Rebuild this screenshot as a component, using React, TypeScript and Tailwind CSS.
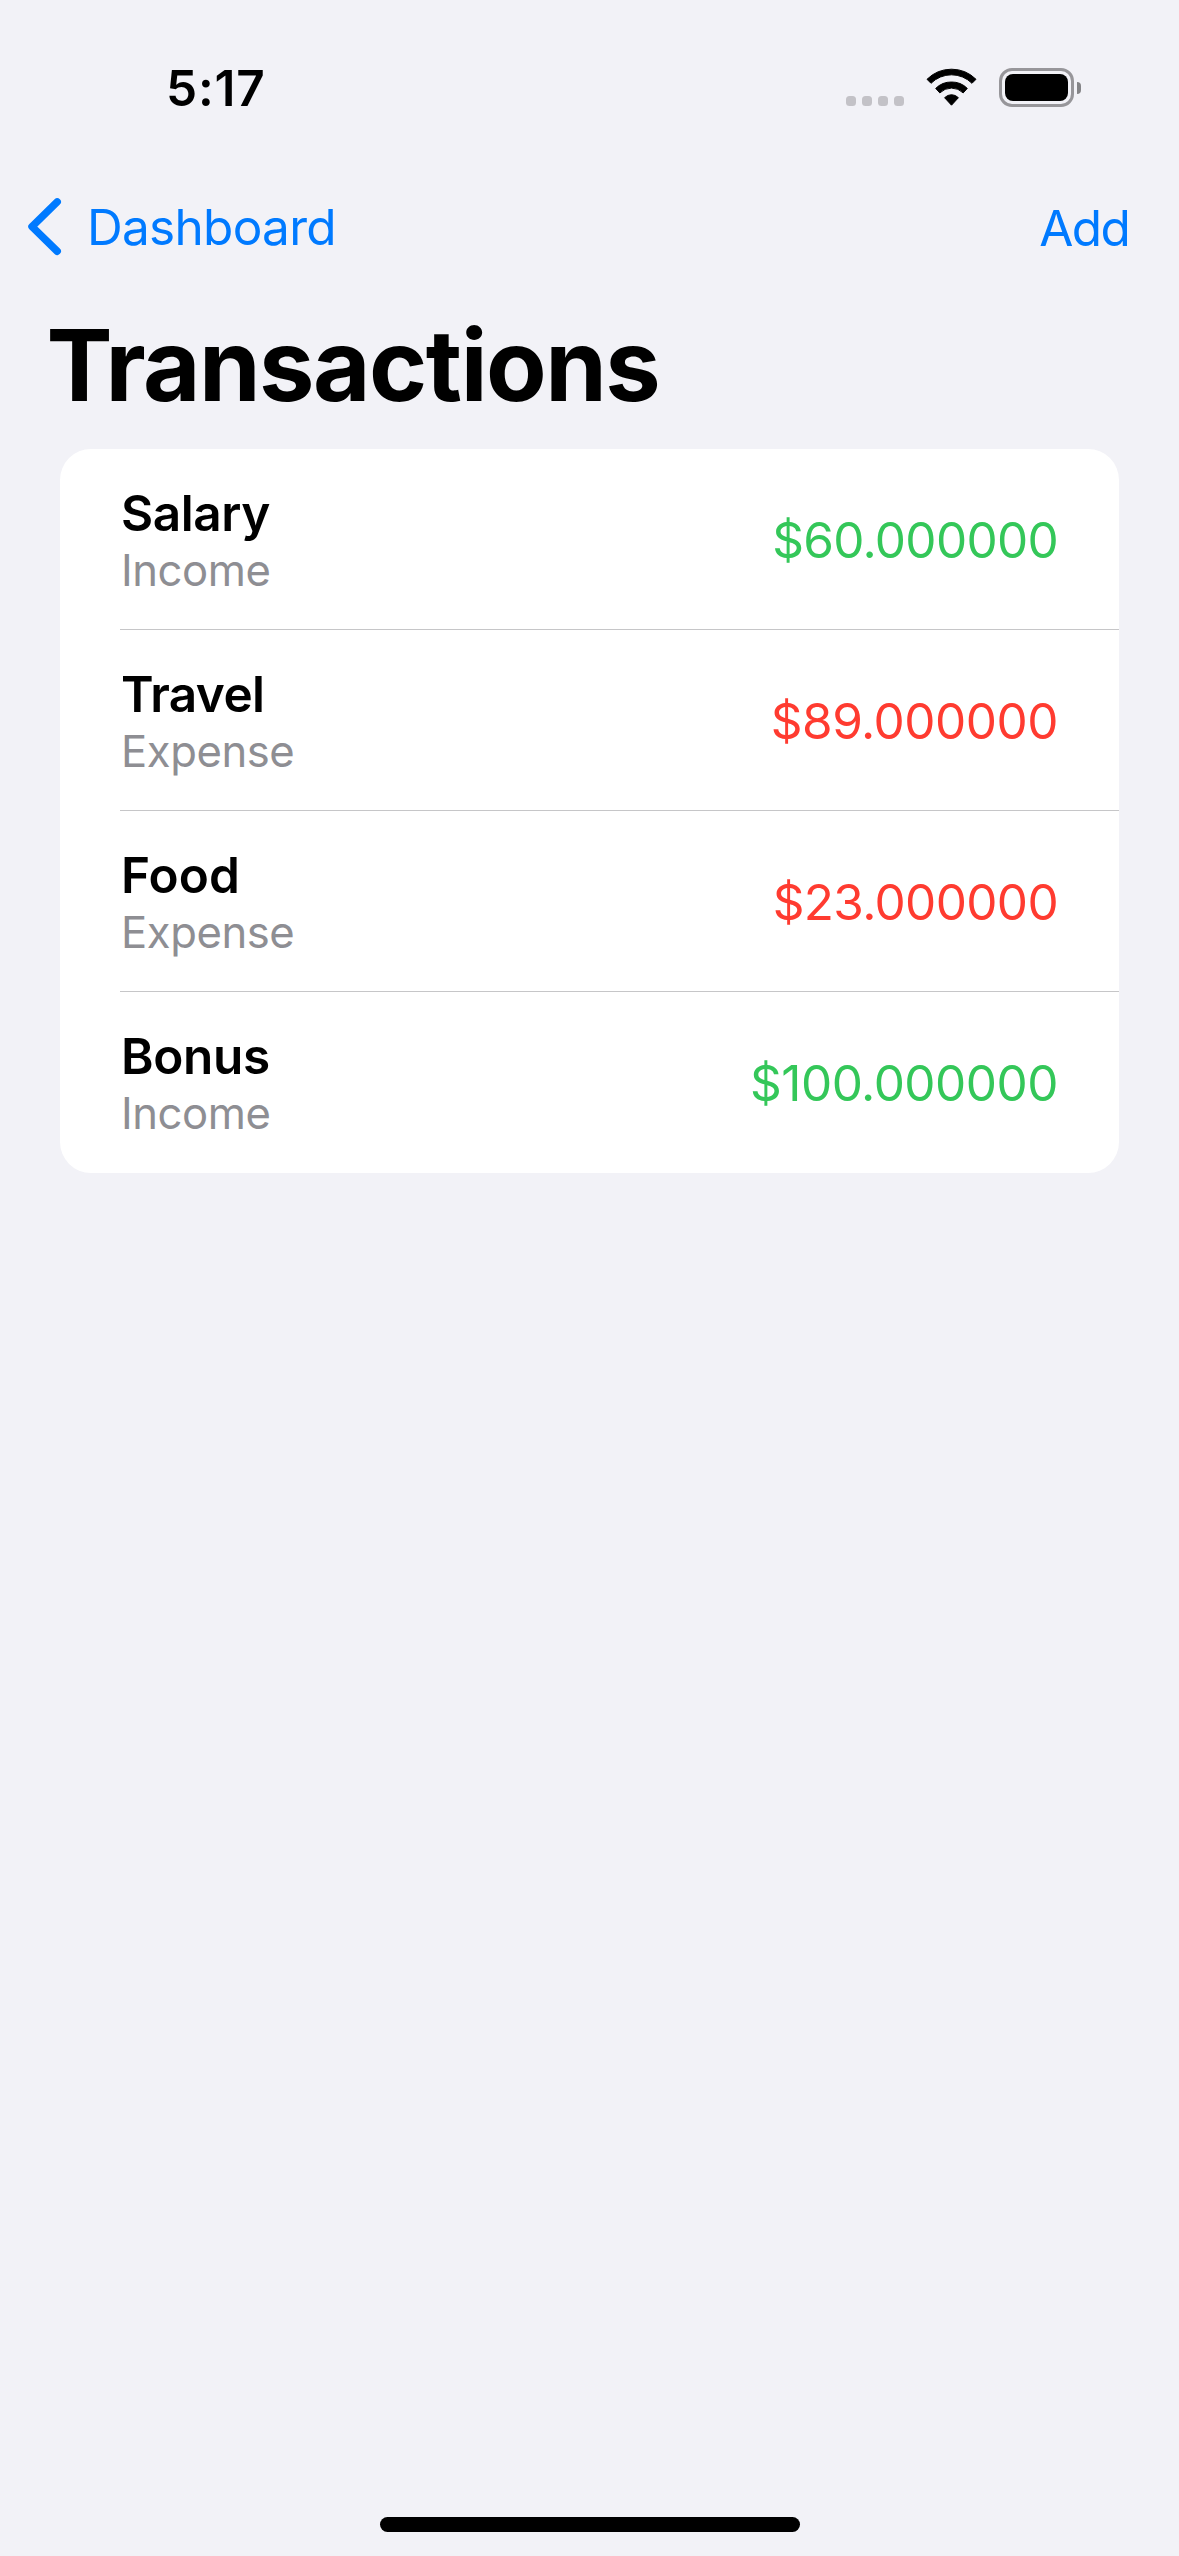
type Transaction = {
  name: string;
  nameTracking: string;
  kind: 'Income' | 'Expense';
  amount: string;
  amountTracking: string;
};

const transactions: Transaction[] = [
  { name: 'Salary', nameTracking: 'tracking-[-0.45px]', kind: 'Income', amount: '$60.000000', amountTracking: 'tracking-[-0.7px]' },
  { name: 'Travel', nameTracking: 'tracking-[-0.6px]', kind: 'Expense', amount: '$89.000000', amountTracking: 'tracking-[-0.5px]' },
  { name: 'Food', nameTracking: 'tracking-[0.1px]', kind: 'Expense', amount: '$23.000000', amountTracking: 'tracking-[-0.65px]' },
  { name: 'Bonus', nameTracking: 'tracking-[-0.34px]', kind: 'Income', amount: '$100.000000', amountTracking: 'tracking-[-0.5px]' },
];

function SignalDots() {
  return (
    <div className="mt-7 flex gap-1.5">
      {[0, 1, 2, 3].map((dot) => (
        <span key={dot} className="size-2.5 rounded-[3.5px] bg-[#c3c2c7]" />
      ))}
    </div>
  );
}

function WifiIcon() {
  return (
    <svg
      className="ml-[22px] h-[39px] w-[51px] fill-black stroke-black"
      viewBox="0 0 51 39"
      strokeWidth="1"
      strokeLinejoin="round"
    >
      <path d="M25.5 1.2A34.8 34.8 0 0 1 50 11.3L46 15.3A29 29 0 0 0 5 15.3L1 11.3A34.8 34.8 0 0 1 25.5 1.2Z" />
      <path d="M25.5 14A22 22 0 0 1 41.3 20.4L37.2 24.9A16.6 16.6 0 0 0 13.8 24.9L9.7 20.4A22 22 0 0 1 25.5 14Z" />
      <path d="M25.5 26.7A10 10 0 0 1 32.4 29.7L25.5 37.2L18.6 29.7A10 10 0 0 1 25.5 26.7Z" />
    </svg>
  );
}

function BatteryIcon() {
  return (
    <div className="ml-[22px] flex items-center gap-[3px]">
      <div className="h-[39px] w-[75px] rounded-[13px] border-3 border-[#97969a] p-[3px]">
        <div className="h-full rounded-[8px] bg-black" />
      </div>
      <div className="h-[12px] w-[4px] rounded-r-full bg-[#848487]" />
    </div>
  );
}

function StatusBar() {
  return (
    <div className="flex h-[176px] items-start justify-between pt-[68px] pr-[98px] pl-[166px]">
      <p className="-mt-[10px] text-[49.5px] leading-[60px] font-semibold tracking-[0.8px]">5:17</p>
      <div className="flex">
        <SignalDots />
        <WifiIcon />
        <BatteryIcon />
      </div>
    </div>
  );
}

function NavigationBar() {
  return (
    <nav className="flex h-[102px] items-center justify-between pr-[50px] pl-[26px] text-[49.5px] leading-[60px] text-[#007aff]">
      <button className="flex items-center">
        <svg
          className="h-[60px] w-[40px] fill-none stroke-current"
          viewBox="0 0 40 60"
          strokeWidth="7.5"
          strokeLinecap="round"
          strokeLinejoin="round"
        >
          <path d="M31.2 4.9L6 29.6L31.2 54.2" />
        </svg>
        <span className="ml-[21px] tracking-[-0.72px]">Dashboard</span>
      </button>
      <button className="mt-[2px] tracking-[-1.7px]">Add</button>
    </nav>
  );
}

function TransactionRow({ item }: { item: Transaction }) {
  return (
    <li className="flex h-[181px] items-center justify-between border-b border-[#c6c6c8] pt-px pr-[61px] last:border-transparent">
      <div className="pl-px">
        <p className={`text-[49.5px] leading-[62px] font-semibold ${item.nameTracking}`}>{item.name}</p>
        <p className={`text-[43.6px] leading-[53px] text-[#8e8e93] ${item.kind === 'Income' ? 'tracking-[-0.44px]' : 'tracking-[-0.42px]'}`}>
          {item.kind}
        </p>
      </div>
      <p
        className={`pt-px text-[49.5px] leading-[60px] ${item.amountTracking} ${item.kind === 'Income' ? 'text-[#34c759]' : 'text-[#ff3b30]'}`}
      >
        {item.amount}
      </p>
    </li>
  );
}

export default function App() {
  return (
    <div className="flex h-[2556px] w-[1179px] flex-col bg-[#f2f2f7] font-['Inter',sans-serif] text-black">
      <StatusBar />
      <NavigationBar />
      <h1 className="h-[171px] pt-[27px] pl-[46.5px] text-[99px] leading-[120px] font-bold tracking-[-1.48px]">
        Transactions
      </h1>
      <ul className="mx-[60px] rounded-[31px] bg-white pl-[60px]">
        {transactions.map((item) => (
          <TransactionRow key={item.name} item={item} />
        ))}
      </ul>
      <div className="mt-auto mb-6 ml-[380px] h-[15px] w-[420px] rounded-full bg-black" />
    </div>
  );
}
